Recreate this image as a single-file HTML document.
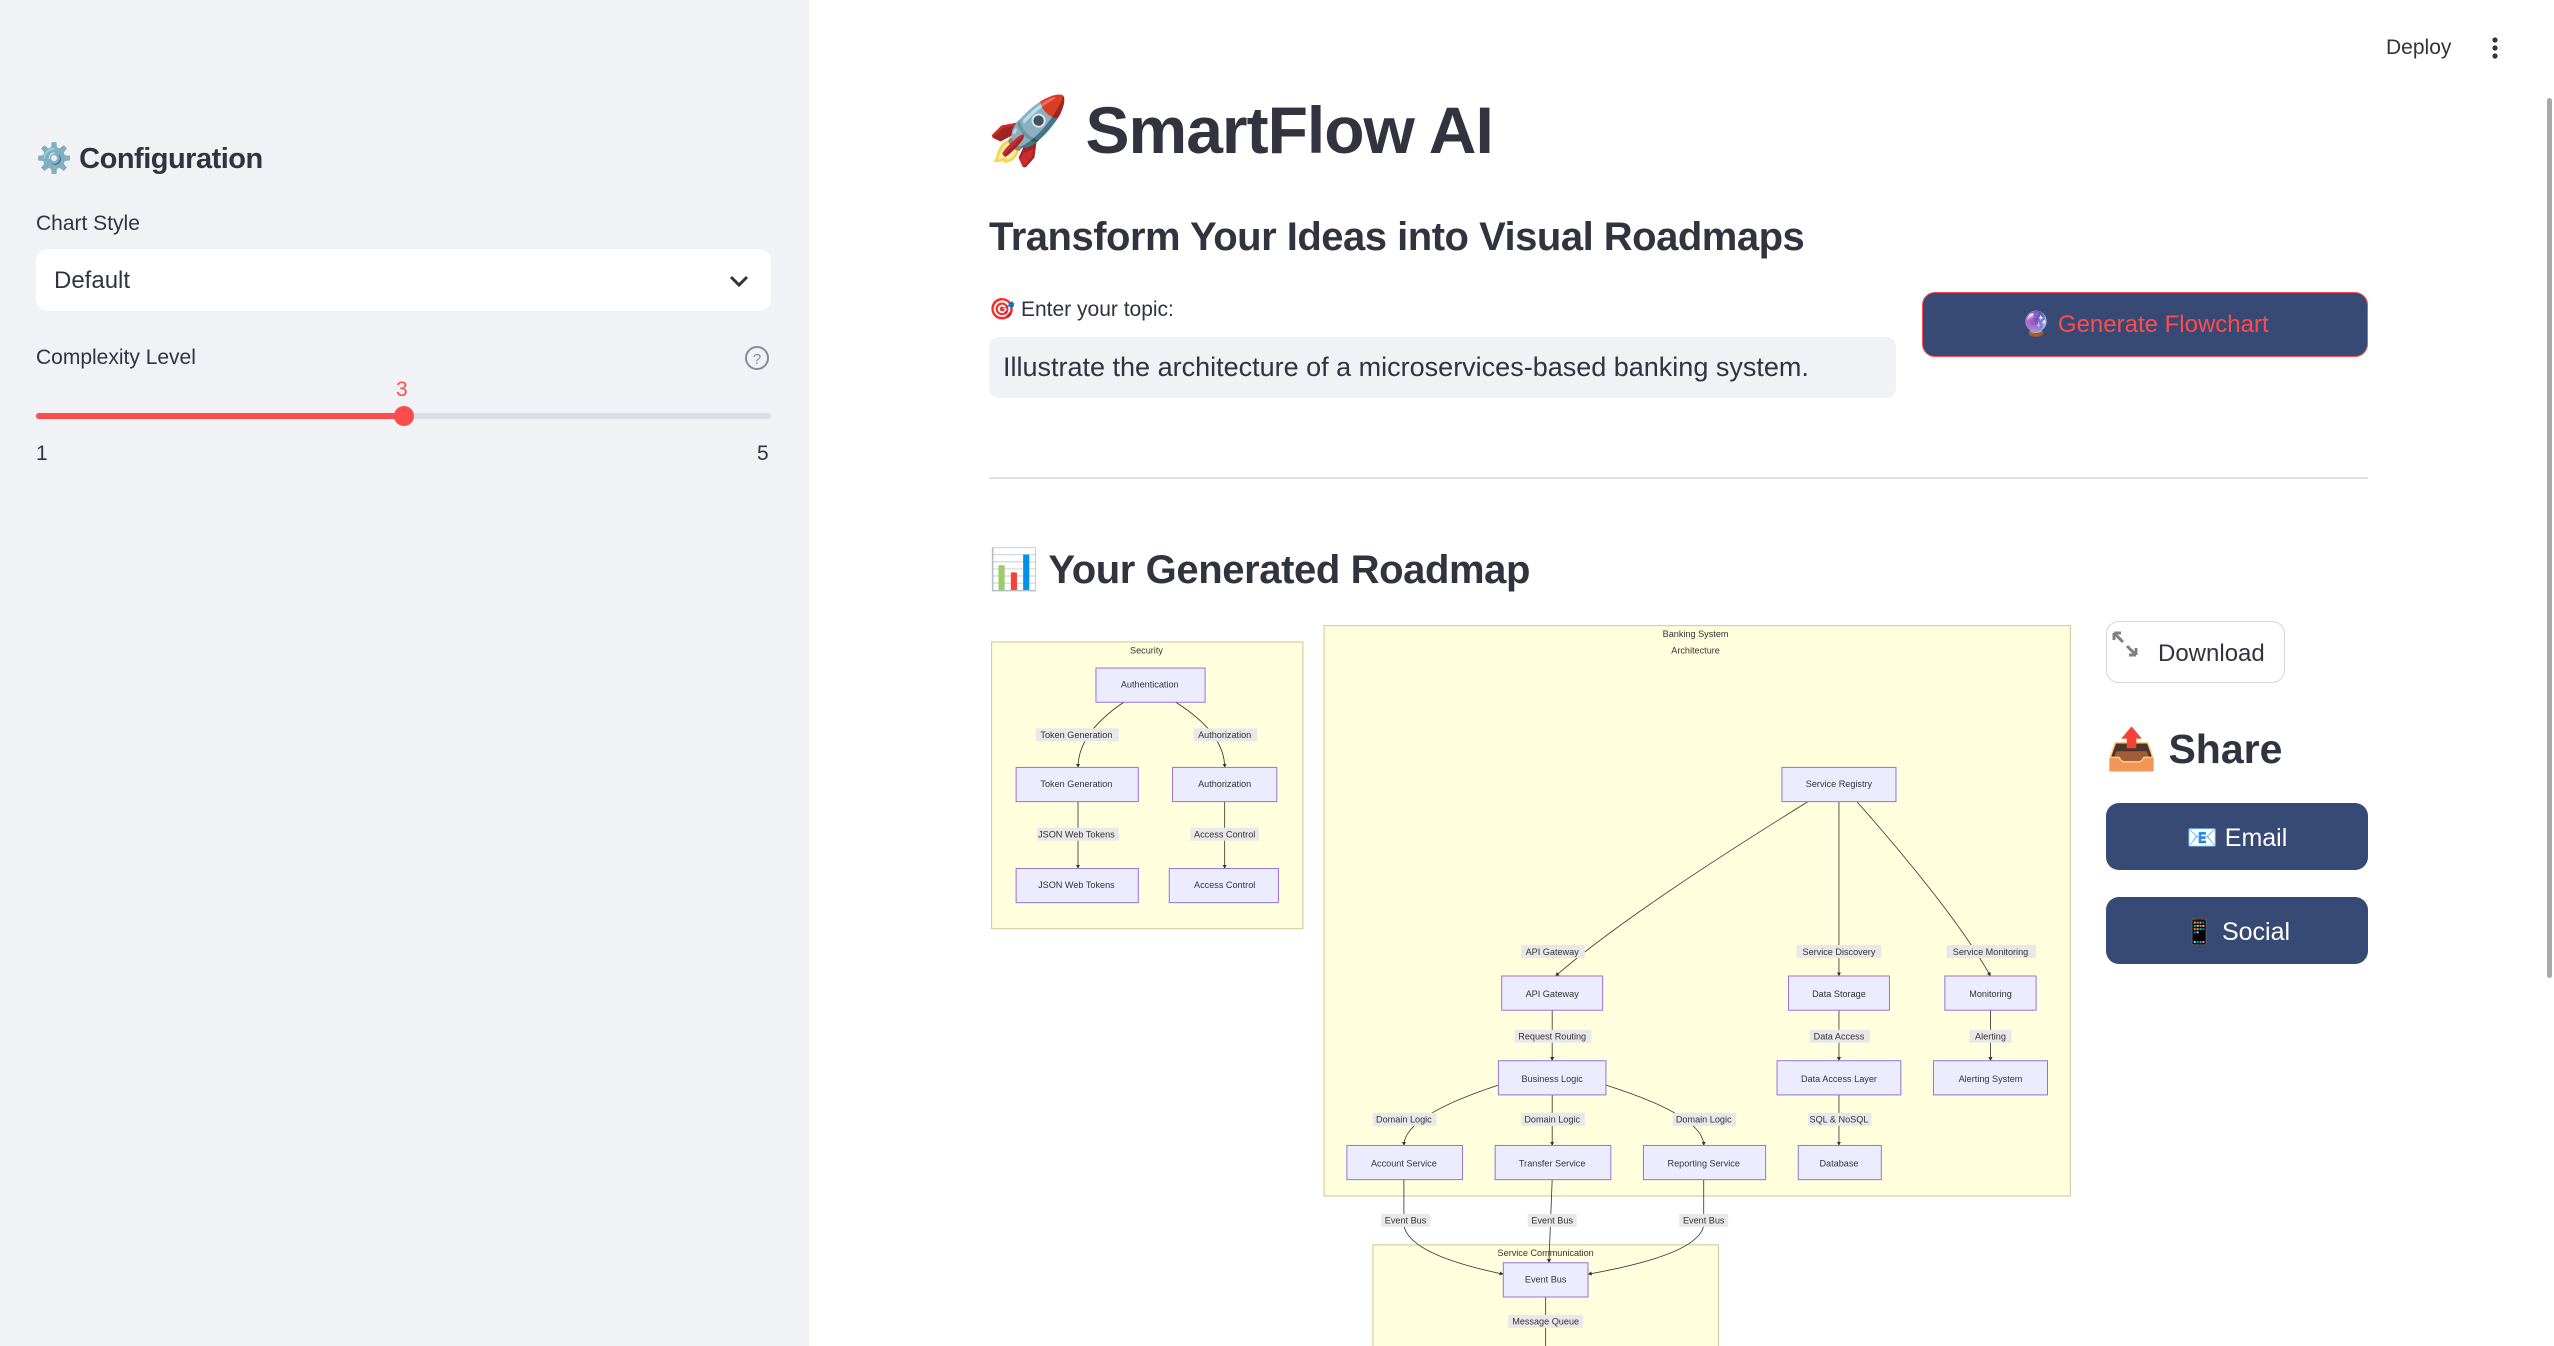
<!DOCTYPE html>
<html><head><meta charset="utf-8"><style>
*{box-sizing:border-box;margin:0;padding:0}
body{width:2554px;height:1346px;overflow:hidden;background:#fff;font-family:"Liberation Sans","Noto Sans CJK JP",sans-serif;color:#31333f;position:relative}
.abs{position:absolute;white-space:nowrap}
#side{position:absolute;left:0;top:0;width:809px;height:1346px;background:#f0f2f6}
.btn{position:absolute;background:#364a75;border-radius:13px;color:#fff;display:flex;align-items:center;justify-content:center;font-size:25px}
</style></head><body>
<div id="side">
  <div class="abs" style="left:36px;top:142px;font-size:29px;font-weight:bold;letter-spacing:-0.5px">⚙️ Configuration</div>
  <div class="abs" style="left:36px;top:212px;font-size:21px">Chart Style</div>
  <div class="abs" style="left:36px;top:249px;width:735px;height:62px;background:#fff;border-radius:12px"></div>
  <div class="abs" style="left:54px;top:267px;font-size:24px">Default</div>
  <svg class="abs" style="left:727px;top:272px" width="24" height="18" viewBox="0 0 24 18"><path d="M4 5 L12 13 L20 5" stroke="#31333f" stroke-width="3" fill="none"/></svg>
  <div class="abs" style="left:36px;top:346px;font-size:21px">Complexity Level</div>
  <svg class="abs" style="left:744px;top:345px" width="26" height="26" viewBox="0 0 26 26"><circle cx="13" cy="13" r="11" stroke="#8a8c95" stroke-width="2" fill="none"/><text x="13" y="19" font-size="15" text-anchor="middle" fill="#8a8c95" font-family="Liberation Sans">?</text></svg>
  <div class="abs" style="left:396px;top:378px;font-size:21px;color:#ff4b4b">3</div>
  <div class="abs" style="left:36px;top:413px;width:735px;height:6px;border-radius:3px;background:#dcdfe6"></div>
  <div class="abs" style="left:36px;top:413px;width:368px;height:6px;border-radius:3px;background:#ff4b4b"></div>
  <div class="abs" style="left:394px;top:406px;width:20px;height:20px;border-radius:50%;background:#ff4b4b"></div>
  <div class="abs" style="left:36px;top:442px;font-size:21px">1</div>
  <div class="abs" style="left:757px;top:442px;font-size:21px">5</div>
</div>
<div class="abs" style="left:2386px;top:36px;font-size:21px">Deploy</div>
<svg class="abs" style="left:2488px;top:35px" width="14" height="26"><circle cx="7" cy="5" r="2.6" fill="#31333f"/><circle cx="7" cy="13" r="2.6" fill="#31333f"/><circle cx="7" cy="21" r="2.6" fill="#31333f"/></svg>
<div class="abs" style="left:2547px;top:98px;width:5px;height:880px;background:#a8a8ad;border-radius:3px"></div>

<div class="abs" style="left:987px;top:92px;font-size:66px;font-weight:bold;letter-spacing:-1px">🚀 SmartFlow AI</div>
<div class="abs" style="left:989px;top:215px;font-size:40px;font-weight:bold;letter-spacing:-0.5px">Transform Your Ideas into Visual Roadmaps</div>
<div class="abs" style="left:989px;top:298px;font-size:21px">🎯 Enter your topic:</div>
<div class="abs" style="left:989px;top:337px;width:907px;height:61px;background:#f0f2f6;border-radius:10px"></div>
<div class="abs" style="left:1003px;top:352px;font-size:27px">Illustrate the architecture of a microservices-based banking system.</div>
<div class="btn" style="left:1922px;top:292px;width:446px;height:65px;border:1.5px solid #ff4b4b;color:#ff4b4b;font-size:24px">🔮 Generate Flowchart</div>
<div class="abs" style="left:989px;top:477px;width:1379px;height:2px;background:#e0e0e4"></div>
<div class="abs" style="left:989px;top:546px;font-size:40px;font-weight:bold;letter-spacing:-0.4px">📊 Your Generated Roadmap</div>

<svg class="abs" style="left:977px;top:619px" width="1108" height="727" viewBox="600 380 680 446" font-family="Liberation Sans" font-size="5.6" text-anchor="middle">
<defs><marker id="a" viewBox="0 0 10 10" refX="9" refY="5" markerWidth="5" markerHeight="5" orient="auto"><path d="M0 0L10 5L0 10z" fill="#333"/></marker></defs>
<g fill="#ffffde" stroke="#c9c98a" stroke-width="0.6">
<rect x="609" y="394" width="191" height="176"/><rect x="813" y="384" width="458" height="350"/><rect x="843" y="764" width="212" height="80"/></g>
<g fill="#333"><text x="704" y="401">Security</text><text x="1041" y="391">Banking System</text><text x="1041" y="401">Architecture</text></g>
<g stroke="#333" stroke-width="0.5" fill="none" marker-end="url(#a)">
<path d="M690 431 Q662 450 662 471"/><path d="M722 431 Q752 450 752 471"/>
<path d="M662 492 L662 533"/><path d="M752 492 L752 533"/>
<path d="M1110 492 Q1000 560 955 599"/><path d="M1129 492 L1129 599"/><path d="M1140 492 Q1200 560 1222 599"/>
<path d="M953 620 L953 651"/><path d="M1129 620 L1129 651"/><path d="M1222 620 L1222 651"/>
<path d="M920 666 Q862 685 862 703"/><path d="M953 672 L953 703"/><path d="M986 666 Q1046 685 1046 703"/><path d="M1129 672 L1129 703"/>
<path d="M862 724 L862 752 Q865 770 923 782"/><path d="M953 724 L951 775"/><path d="M1046 724 L1046 752 Q1043 770 975 782"/>
<path d="M949 796 L949 830"/></g>
<g fill="#e8e8e8"><rect x="636" y="447" width="51" height="8"/><rect x="733" y="447" width="39" height="8"/><rect x="637" y="508" width="50" height="8"/><rect x="731" y="508" width="42" height="8"/>
<rect x="934" y="580" width="39" height="8"/><rect x="1103" y="580" width="52" height="8"/><rect x="1195" y="580" width="55" height="8"/>
<rect x="930" y="632" width="47" height="8"/><rect x="1111" y="632" width="37" height="8"/><rect x="1209" y="632" width="26" height="8"/>
<rect x="843" y="683" width="39" height="8"/><rect x="934" y="683" width="39" height="8"/><rect x="1027" y="683" width="39" height="8"/><rect x="1110" y="683" width="39" height="8"/>
<rect x="848" y="745" width="30" height="8"/><rect x="938" y="745" width="30" height="8"/><rect x="1031" y="745" width="30" height="8"/><rect x="926" y="807" width="46" height="8"/></g>
<g fill="#ececff" stroke="#9370db" stroke-width="0.6">
<rect x="673" y="410" width="67" height="21"/><rect x="624" y="471" width="75" height="21"/><rect x="720" y="471" width="64" height="21"/><rect x="624" y="533" width="75" height="21"/><rect x="718" y="533" width="67" height="21"/>
<rect x="1094" y="471" width="70" height="21"/><rect x="922" y="599" width="62" height="21"/><rect x="1098" y="599" width="62" height="21"/><rect x="1194" y="599" width="56" height="21"/>
<rect x="920" y="651" width="66" height="21"/><rect x="1091" y="651" width="76" height="21"/><rect x="1187" y="651" width="70" height="21"/>
<rect x="827" y="703" width="71" height="21"/><rect x="918" y="703" width="71" height="21"/><rect x="1009" y="703" width="75" height="21"/><rect x="1104" y="703" width="51" height="21"/>
<rect x="923" y="775" width="52" height="21"/></g>
<g fill="#333">
<text x="706" y="422">Authentication</text><text x="661" y="483">Token Generation</text><text x="752" y="483">Authorization</text><text x="661" y="545">JSON Web Tokens</text><text x="752" y="545">Access Control</text>
<text x="661" y="453">Token Generation</text><text x="752" y="453">Authorization</text><text x="661" y="514">JSON Web Tokens</text><text x="752" y="514">Access Control</text>
<text x="1129" y="483">Service Registry</text><text x="953" y="586">API Gateway</text><text x="1129" y="586">Service Discovery</text><text x="1222" y="586">Service Monitoring</text>
<text x="953" y="612">API Gateway</text><text x="1129" y="612">Data Storage</text><text x="1222" y="612">Monitoring</text>
<text x="953" y="638">Request Routing</text><text x="1129" y="638">Data Access</text><text x="1222" y="638">Alerting</text>
<text x="953" y="664">Business Logic</text><text x="1129" y="664">Data Access Layer</text><text x="1222" y="664">Alerting System</text>
<text x="862" y="689">Domain Logic</text><text x="953" y="689">Domain Logic</text><text x="1046" y="689">Domain Logic</text><text x="1129" y="689">SQL &amp; NoSQL</text>
<text x="862" y="716">Account Service</text><text x="953" y="716">Transfer Service</text><text x="1046" y="716">Reporting Service</text><text x="1129" y="716">Database</text>
<text x="863" y="751">Event Bus</text><text x="953" y="751">Event Bus</text><text x="1046" y="751">Event Bus</text>
<text x="949" y="771">Service Communication</text><text x="949" y="787">Event Bus</text><text x="949" y="813">Message Queue</text></g>
</svg>

<div class="abs" style="left:2106px;top:621px;width:179px;height:62px;border:1px solid #d6d6da;border-radius:13px;background:#fff"></div>
<svg class="abs" style="left:2112px;top:631px" width="26" height="26" viewBox="0 0 26 26"><path d="M2 2 L11 11 M2 2 L2 9 M2 2 L9 2 M24 24 L15 15 M24 24 L24 17 M24 24 L17 24" stroke="#808080" stroke-width="3" fill="none"/></svg>
<div class="abs" style="left:2158px;top:640px;font-size:24px">Download</div>
<div class="abs" style="left:2106px;top:726px;font-size:41px;font-weight:bold">📤 Share</div>
<div class="btn" style="left:2106px;top:803px;width:262px;height:67px;padding-top:3px">📧 Email</div>
<div class="btn" style="left:2106px;top:897px;width:262px;height:67px;padding-top:3px">📱 Social</div>
</body></html>
